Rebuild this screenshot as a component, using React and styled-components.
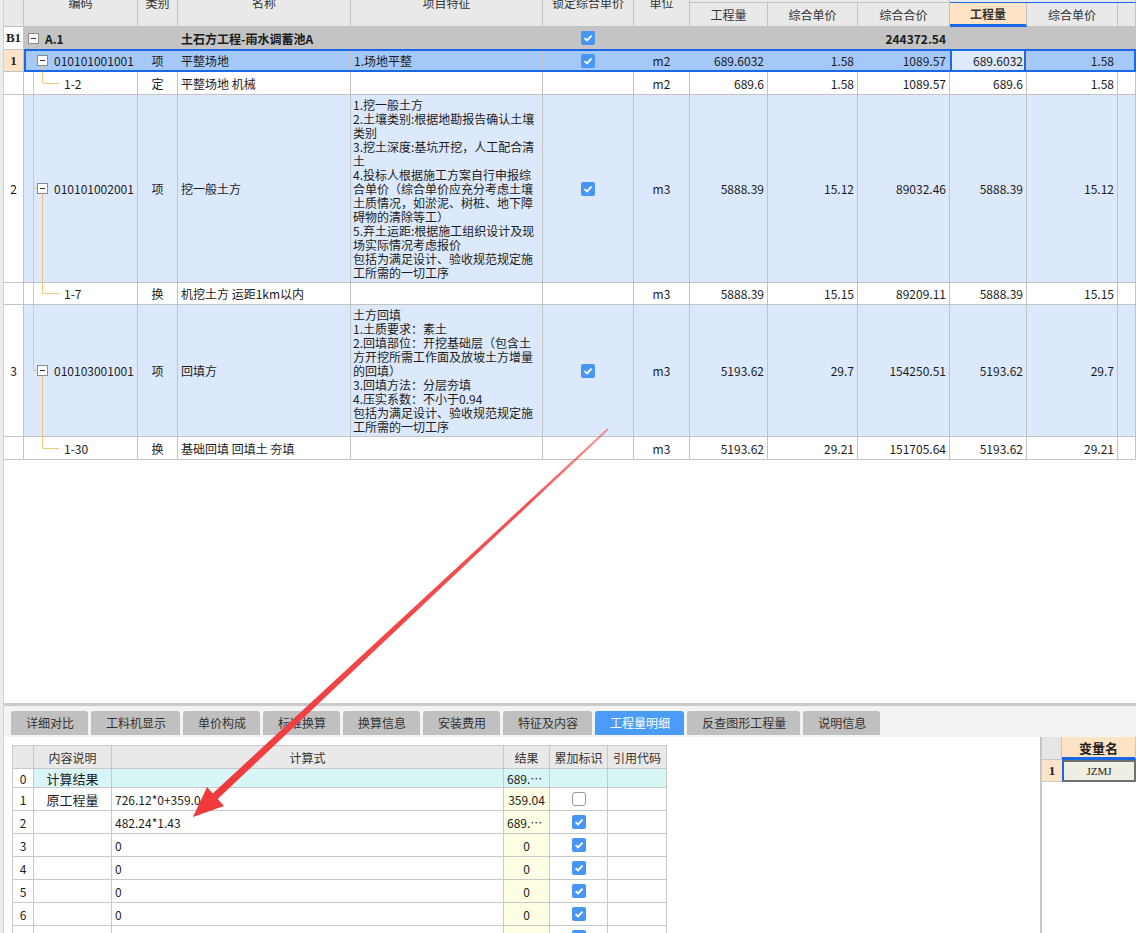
import React from "react"
import styled, { createGlobalStyle, css } from "styled-components"

const COLS = "20px 114px 40px 173px 192px 91px 56px 78px 90px 92px 77px 91px 1fr"
const LINE = "#c3c3c3"
const BLUE = "#1a68e6"
const TREE = "#f5c57e"

const GlobalStyle = createGlobalStyle`
  html, body {
    margin: 0;
    padding: 0;
    background: #fff;
    overflow: hidden;
  }
  body {
    font-family: "Noto Sans CJK SC", "Noto Sans", sans-serif;
    font-size: 12px;
    color: #1c1c1c;
  }
  #root {
    width: 1136px;
    height: 933px;
  }
`

const feature2 = [
  "1.挖一般土方",
  "2.土壤类别:根据地勘报告确认土壤",
  "类别",
  "3.挖土深度:基坑开挖，人工配合清",
  "土",
  "4.投标人根据施工方案自行申报综",
  "合单价（综合单价应充分考虑土壤",
  "土质情况，如淤泥、树桩、地下障",
  "碍物的清除等工）",
  "5.弃土运距:根据施工组织设计及现",
  "场实际情况考虑报价",
  "包括为满足设计、验收规范规定施",
  "工所需的一切工序",
]

const feature3 = [
  "土方回填",
  "1.土质要求：素土",
  "2.回填部位：开挖基础层（包含土",
  "方开挖所需工作面及放坡土方增量",
  "的回填）",
  "3.回填方法：分层夯填",
  "4.压实系数：不小于0.94",
  "包括为满足设计、验收规范规定施",
  "工所需的一切工序",
]

const topRows = [
  { kind: "group", no: "B1", code: "A.1", name: "土石方工程-雨水调蓄池A", lock: true, h: 23, vals: ["", "", "244372.54", "", ""] },
  { kind: "item", no: "1", code: "010101001001", type: "项", name: "平整场地", feature: ["1.场地平整"], lock: true, unit: "m2", h: 22, vals: ["689.6032", "1.58", "1089.57", "689.6032", "1.58"], selected: true },
  { kind: "sub", code: "1-2", type: "定", name: "平整场地 机械", unit: "m2", h: 23, vals: ["689.6", "1.58", "1089.57", "689.6", "1.58"] },
  { kind: "item", no: "2", code: "010101002001", type: "项", name: "挖一般土方", feature: feature2, lock: true, unit: "m3", vals: ["5888.39", "15.12", "89032.46", "5888.39", "15.12"] },
  { kind: "sub", code: "1-7", type: "换", name: "机挖土方 运距1km以内", unit: "m3", h: 22, vals: ["5888.39", "15.15", "89209.11", "5888.39", "15.15"] },
  { kind: "item", no: "3", code: "010103001001", type: "项", name: "回填方", feature: feature3, lock: true, unit: "m3", vals: ["5193.62", "29.7", "154250.51", "5193.62", "29.7"], last: true },
  { kind: "sub", code: "1-30", type: "换", name: "基础回填 回填土 夯填", unit: "m3", h: 23, vals: ["5193.62", "29.21", "151705.64", "5193.62", "29.21"], last: true },
]

const tabs = ["详细对比", "工料机显示", "单价构成", "标准换算", "换算信息", "安装费用", "特征及内容", "工程量明细", "反查图形工程量", "说明信息"]

const detailRows = [
  { no: "0", label: "计算结果", formula: "", result: "689.6032", mark: null, total: true },
  { no: "1", label: "原工程量", formula: "726.12*0+359.04", result: "359.04", mark: false },
  { no: "2", label: "", formula: "482.24*1.43", result: "689.6032", mark: true },
  { no: "3", label: "", formula: "0", result: "0", mark: true },
  { no: "4", label: "", formula: "0", result: "0", mark: true },
  { no: "5", label: "", formula: "0", result: "0", mark: true },
  { no: "6", label: "", formula: "0", result: "0", mark: true },
  { no: "7", label: "", formula: "0", result: "0", mark: true },
]

function Check({ on }) {
  return (
    <CheckBox $on={on}>
      {on && (
        <svg width="10" height="10" viewBox="0 0 10 10">
          <path d="M1.6 5.1 L4 7.5 L8.6 2.6" fill="none" stroke="#fff" strokeWidth="1.9" />
        </svg>
      )}
    </CheckBox>
  )
}

function Tree({ kind, last }) {
  if (kind === "group") {
    return (
      <TreeSvg>
        <line x1="9.5" y1="50%" x2="9.5" y2="100%" />
      </TreeSvg>
    )
  }
  if (kind === "item") {
    return (
      <TreeSvg>
        <line x1="9.5" y1="0" x2="9.5" y2={last ? "50%" : "100%"} />
        <line x1="9.5" y1="50%" x2="13" y2="50%" />
        <line x1="18.5" y1="50%" x2="18.5" y2="100%" />
      </TreeSvg>
    )
  }
  return (
    <TreeSvg>
      {!last && <line x1="9.5" y1="0" x2="9.5" y2="100%" />}
      <line x1="18.5" y1="0" x2="18.5" y2="50%" />
      <line x1="18.5" y1="50%" x2="35" y2="50%" />
    </TreeSvg>
  )
}

function TopRow({ row }) {
  const group = row.kind === "group"
  const tall = row.feature && row.feature.length > 1
  const bg = group ? "#c4c4c4" : row.selected ? "#a4c8f8" : tall ? "#dce9fc" : "#fff"
  const indent = group ? 4 : row.kind === "item" ? 13 : 40
  return (
    <Row $bg={bg} $bold={group} $selected={row.selected} $h={row.h}>
      <NoCell $bg={row.selected ? "#fde4c8" : "#fff"} $serif={group || row.selected}>
        {row.no}
      </NoCell>
      <CodeCell $indent={indent}>
        <Tree kind={row.kind} last={row.last} />
        {row.kind !== "sub" && <ExpandBox />}
        <span>{row.code}</span>
      </CodeCell>
      <Cell $align="center">{row.type}</Cell>
      <Cell>{row.name}</Cell>
      {tall ? (
        <FeatureCell>
          {row.feature.map((l, i) => (
            <FeatureLine key={i}>{l}</FeatureLine>
          ))}
        </FeatureCell>
      ) : (
        <Cell>{row.feature ? row.feature[0] : ""}</Cell>
      )}
      <Cell $align="center">{row.lock && <Check on />}</Cell>
      <Cell $align="center">{row.unit}</Cell>
      {row.vals.map((v, i) => (
        <Cell
          key={i}
          $align="right"
          $active={row.selected && i === 3}
          $bg={row.selected && i === 3 ? "#dde9fc" : undefined}
        >
          {v}
        </Cell>
      ))}
      <Cell />
    </Row>
  )
}

export default function App() {
  return (
    <Page>
      <GlobalStyle />
      <LeftStrip />
      <Main>
        <TopPane>
          <HeaderViewport>
            <HeaderGrid>
              <HeadCell $col="1" $row="1 / 3" />
              <HeadCell $col="2" $row="1 / 3">编码</HeadCell>
              <HeadCell $col="3" $row="1 / 3">类别</HeadCell>
              <HeadCell $col="4" $row="1 / 3">名称</HeadCell>
              <HeadCell $col="5" $row="1 / 3">项目特征</HeadCell>
              <HeadCell $col="6" $row="1 / 3">锁定综合单价</HeadCell>
              <HeadCell $col="7" $row="1 / 3">单位</HeadCell>
              <HeadCell $col="8 / 11" $row="1" />
              <HeadCell $col="11 / 14" $row="1" $blueLine />
              <HeadCell $col="8" $row="2">工程量</HeadCell>
              <HeadCell $col="9" $row="2">综合单价</HeadCell>
              <HeadCell $col="10" $row="2">综合合价</HeadCell>
              <HeadCell $col="11" $row="2" $hot>工程量</HeadCell>
              <HeadCell $col="12" $row="2">综合单价</HeadCell>
              <HeadCell $col="13" $row="2" />
            </HeaderGrid>
          </HeaderViewport>
          {topRows.map((r, i) => (
            <TopRow key={i} row={r} />
          ))}
        </TopPane>
        <Splitter />
        <TabBar>
          {tabs.map((t) => (
            <Tab key={t} $active={t === "工程量明细"}>
              {t}
            </Tab>
          ))}
        </TabBar>
        <Bottom>
          <DetailArea>
            <DetailTable>
              <DHead />
              <DHead>内容说明</DHead>
              <DHead>计算式</DHead>
              <DHead>结果</DHead>
              <DHead>累加标识</DHead>
              <DHead>引用代码</DHead>
              {detailRows.map((r) => (
                <React.Fragment key={r.no}>
                  <DCell $h={r.total ? 19 : 23} $align="center">{r.no}</DCell>
                  <DCell $h={r.total ? 19 : 23} $align="center" $bg={r.total ? "#d9f6f6" : undefined} $big>
                    {r.label}
                  </DCell>
                  <DCell $h={r.total ? 19 : 23} $bg={r.total ? "#d9f6f6" : undefined}>
                    {r.formula}
                  </DCell>
                  <DCell $h={r.total ? 19 : 23} $align="center" $bg={r.total ? "#d9f6f6" : "#fefee4"}>
                    <Ellip>{r.result}</Ellip>
                  </DCell>
                  <DCell $h={r.total ? 19 : 23} $align="center" $bg={r.total ? "#d9f6f6" : undefined}>
                    {r.mark !== null && <Check on={r.mark} />}
                  </DCell>
                  <DCell $h={r.total ? 19 : 23} $bg={r.total ? "#d9f6f6" : undefined} />
                </React.Fragment>
              ))}
            </DetailTable>
          </DetailArea>
          <VarPanel>
            <VarTable>
              <VarHead />
              <VarHead $hot>变量名</VarHead>
              <VarNo>1</VarNo>
              <VarValue>JZMJ</VarValue>
            </VarTable>
          </VarPanel>
        </Bottom>
      </Main>
      <ArrowLayer viewBox="0 0 1136 933">
        <defs>
          <linearGradient id="arrowFade" gradientUnits="userSpaceOnUse" x1="608" y1="429" x2="215" y2="797">
            <stop offset="0" stopColor="#f3484a" stopOpacity="0.55" />
            <stop offset="0.2" stopColor="#f3484a" stopOpacity="0.95" />
            <stop offset="1" stopColor="#f03a3c" />
          </linearGradient>
        </defs>
        <polygon points="608.6,429.7 607.4,428.3 212.4,793.8 217.4,799.2" fill="url(#arrowFade)" />
        <polygon points="193,817 224,806 207,787" fill="#f03a3c" />
      </ArrowLayer>
    </Page>
  )
}

const Page = styled.div`
  position: relative;
  display: flex;
  width: 1136px;
  height: 933px;
  overflow: hidden;
  background: #fff;
`

const LeftStrip = styled.div`
  flex: none;
  width: 3px;
  background: #ececec;
  border-right: 1px solid #d0d0d0;
`

const Main = styled.div`
  flex: 1;
  min-width: 0;
  display: flex;
  flex-direction: column;
`

const TopPane = styled.div`
  flex: none;
  height: 703px;
  overflow: hidden;
`

const HeaderViewport = styled.div`
  height: 27px;
  overflow: hidden;
`

const HeaderGrid = styled.div`
  display: grid;
  grid-template-columns: ${COLS};
  grid-template-rows: 25px 24px;
  margin-top: -22px;
`

const HeadCell = styled.div`
  grid-column: ${(p) => p.$col};
  grid-row: ${(p) => p.$row};
  display: flex;
  align-items: center;
  justify-content: center;
  background: ${(p) => (p.$hot ? "#fee4c4" : "#e9e9e9")};
  border-right: 1px solid ${LINE};
  border-bottom: ${(p) => (p.$hot ? `3px solid ${BLUE}` : `1px solid ${p.$blueLine ? BLUE : LINE}`)};
  color: #333;
  font-weight: ${(p) => (p.$hot ? 700 : 400)};
  white-space: nowrap;
  overflow: hidden;
`

const Row = styled.div`
  position: relative;
  display: grid;
  grid-template-columns: ${COLS};
  min-height: ${(p) => p.$h || 23}px;
  background: ${(p) => p.$bg};
  font-weight: ${(p) => (p.$bold ? 700 : 400)};
  ${(p) =>
    p.$selected &&
    css`
      &::after {
        content: "";
        position: absolute;
        left: 20px;
        right: 0;
        top: -1px;
        bottom: 0;
        border: 2px solid ${BLUE};
        pointer-events: none;
      }
    `}
`

const Cell = styled.div`
  position: relative;
  min-width: 0;
  display: flex;
  align-items: center;
  justify-content: ${(p) => ({ right: "flex-end", center: "center" }[p.$align] || "flex-start")};
  padding: 0 3px;
  border-right: 1px solid ${LINE};
  border-bottom: 1px solid ${LINE};
  white-space: nowrap;
  overflow: hidden;
  background: ${(p) => p.$bg || "transparent"};
  ${(p) => p.$active && css`box-shadow: inset 2px 0 0 ${BLUE}, inset -2px 0 0 ${BLUE};`}
`

const NoCell = styled(Cell)`
  justify-content: center;
  padding: 0;
  background: ${(p) => p.$bg};
  ${(p) =>
    p.$serif &&
    css`
      font-family: "Liberation Serif", serif;
      font-weight: 700;
      font-size: 13px;
    `}
`

const CodeCell = styled(Cell)`
  padding-left: ${(p) => p.$indent}px;
`

const TreeSvg = styled.svg`
  position: absolute;
  left: 0;
  top: 0;
  width: 40px;
  height: 100%;
  overflow: visible;
  line {
    stroke: ${TREE};
    stroke-width: 1;
    shape-rendering: crispEdges;
  }
`

const ExpandBox = styled.span`
  position: relative;
  flex: none;
  box-sizing: border-box;
  width: 11px;
  height: 11px;
  margin-right: 6px;
  border: 1px solid #8c8c8c;
  background: #fff;
  &::after {
    content: "";
    position: absolute;
    left: 2px;
    right: 2px;
    top: 4px;
    height: 1px;
    background: #333;
  }
`

const FeatureCell = styled(Cell)`
  display: block;
  padding: 3px 1px 2px 2px;
  line-height: 14px;
`

const FeatureLine = styled.div`
  height: 14px;
  white-space: nowrap;
`

const CheckBox = styled.span`
  flex: none;
  box-sizing: border-box;
  width: 14px;
  height: 14px;
  display: flex;
  align-items: center;
  justify-content: center;
  border-radius: ${(p) => (p.$on ? "2px" : "3px")};
  background: ${(p) => (p.$on ? "#4896f3" : "#fff")};
  border: ${(p) => (p.$on ? "none" : "1px solid #9a9a9a")};
`

const Splitter = styled.div`
  flex: none;
  height: 3px;
  background: #cbcbcb;
`

const TabBar = styled.div`
  flex: none;
  height: 31px;
  box-sizing: border-box;
  display: flex;
  align-items: flex-end;
  gap: 3px;
  padding: 5px 0 2px 7px;
  background: #f3f3f3;
`

const Tab = styled.div`
  height: 24px;
  line-height: 24px;
  padding: 0 14px 0 15px;
  border-radius: 3px 3px 0 0;
  background: ${(p) => (p.$active ? "#4a9cf6" : "#c0c0c0")};
  color: ${(p) => (p.$active ? "#fff" : "#333")};
  white-space: nowrap;
`

const Bottom = styled.div`
  flex: 1;
  min-height: 0;
  display: flex;
`

const DetailArea = styled.div`
  flex: 1;
  min-width: 0;
  padding: 8px 0 0 8px;
  background: #fff;
`

const DetailTable = styled.div`
  display: grid;
  grid-template-columns: 21px 78px 392px 46px 58px 59px;
  width: max-content;
  border-left: 1px solid #c8c8c8;
  border-top: 1px solid #c8c8c8;
`

const DHead = styled.div`
  height: 22px;
  display: flex;
  align-items: center;
  justify-content: center;
  background: #e9e9e9;
  color: #333;
  border-right: 1px solid #c8c8c8;
  border-bottom: 1px solid #c8c8c8;
  white-space: nowrap;
`

const DCell = styled.div`
  box-sizing: border-box;
  height: ${(p) => p.$h}px;
  min-width: 0;
  display: flex;
  align-items: center;
  justify-content: ${(p) => (p.$align === "center" ? "center" : "flex-start")};
  padding: 0 3px;
  background: ${(p) => p.$bg || "#fff"};
  border-right: 1px solid #c8c8c8;
  border-bottom: 1px solid #c8c8c8;
  white-space: nowrap;
  overflow: hidden;
  font-size: ${(p) => (p.$big ? "13px" : "12px")};
`

const Ellip = styled.span`
  min-width: 0;
  max-width: 100%;
  overflow: hidden;
  text-overflow: ellipsis;
  white-space: nowrap;
`

const VarPanel = styled.div`
  flex: none;
  width: 94px;
  border-left: 2px solid #c6c6c6;
  background: #fff;
`

const VarTable = styled.div`
  display: grid;
  grid-template-columns: 20px 1fr;
  grid-template-rows: 23px 22px;
`

const VarHead = styled.div`
  box-sizing: border-box;
  display: flex;
  align-items: center;
  justify-content: center;
  background: ${(p) => (p.$hot ? "#fee4c4" : "#e6e6e6")};
  border-right: 1px solid #c8c8c8;
  border-bottom: ${(p) => (p.$hot ? `3px solid ${BLUE}` : "1px solid #c8c8c8")};
  font-weight: ${(p) => (p.$hot ? 700 : 400)};
  font-size: 13px;
  color: #222;
`

const VarNo = styled.div`
  display: flex;
  align-items: center;
  justify-content: center;
  background: #fde4c8;
  border-bottom: 1px solid #c8c8c8;
  font-family: "Liberation Serif", serif;
  font-weight: 700;
  font-size: 13px;
`

const VarValue = styled.div`
  box-sizing: border-box;
  display: flex;
  align-items: center;
  justify-content: center;
  background: #efeee3;
  border: 2px solid #6f6f6f;
  border-left-color: ${BLUE};
  font-family: "Liberation Serif", serif;
  font-size: 11px;
  color: #222;
`

const ArrowLayer = styled.svg`
  position: absolute;
  left: 0;
  top: 0;
  width: 1136px;
  height: 933px;
  pointer-events: none;
`
